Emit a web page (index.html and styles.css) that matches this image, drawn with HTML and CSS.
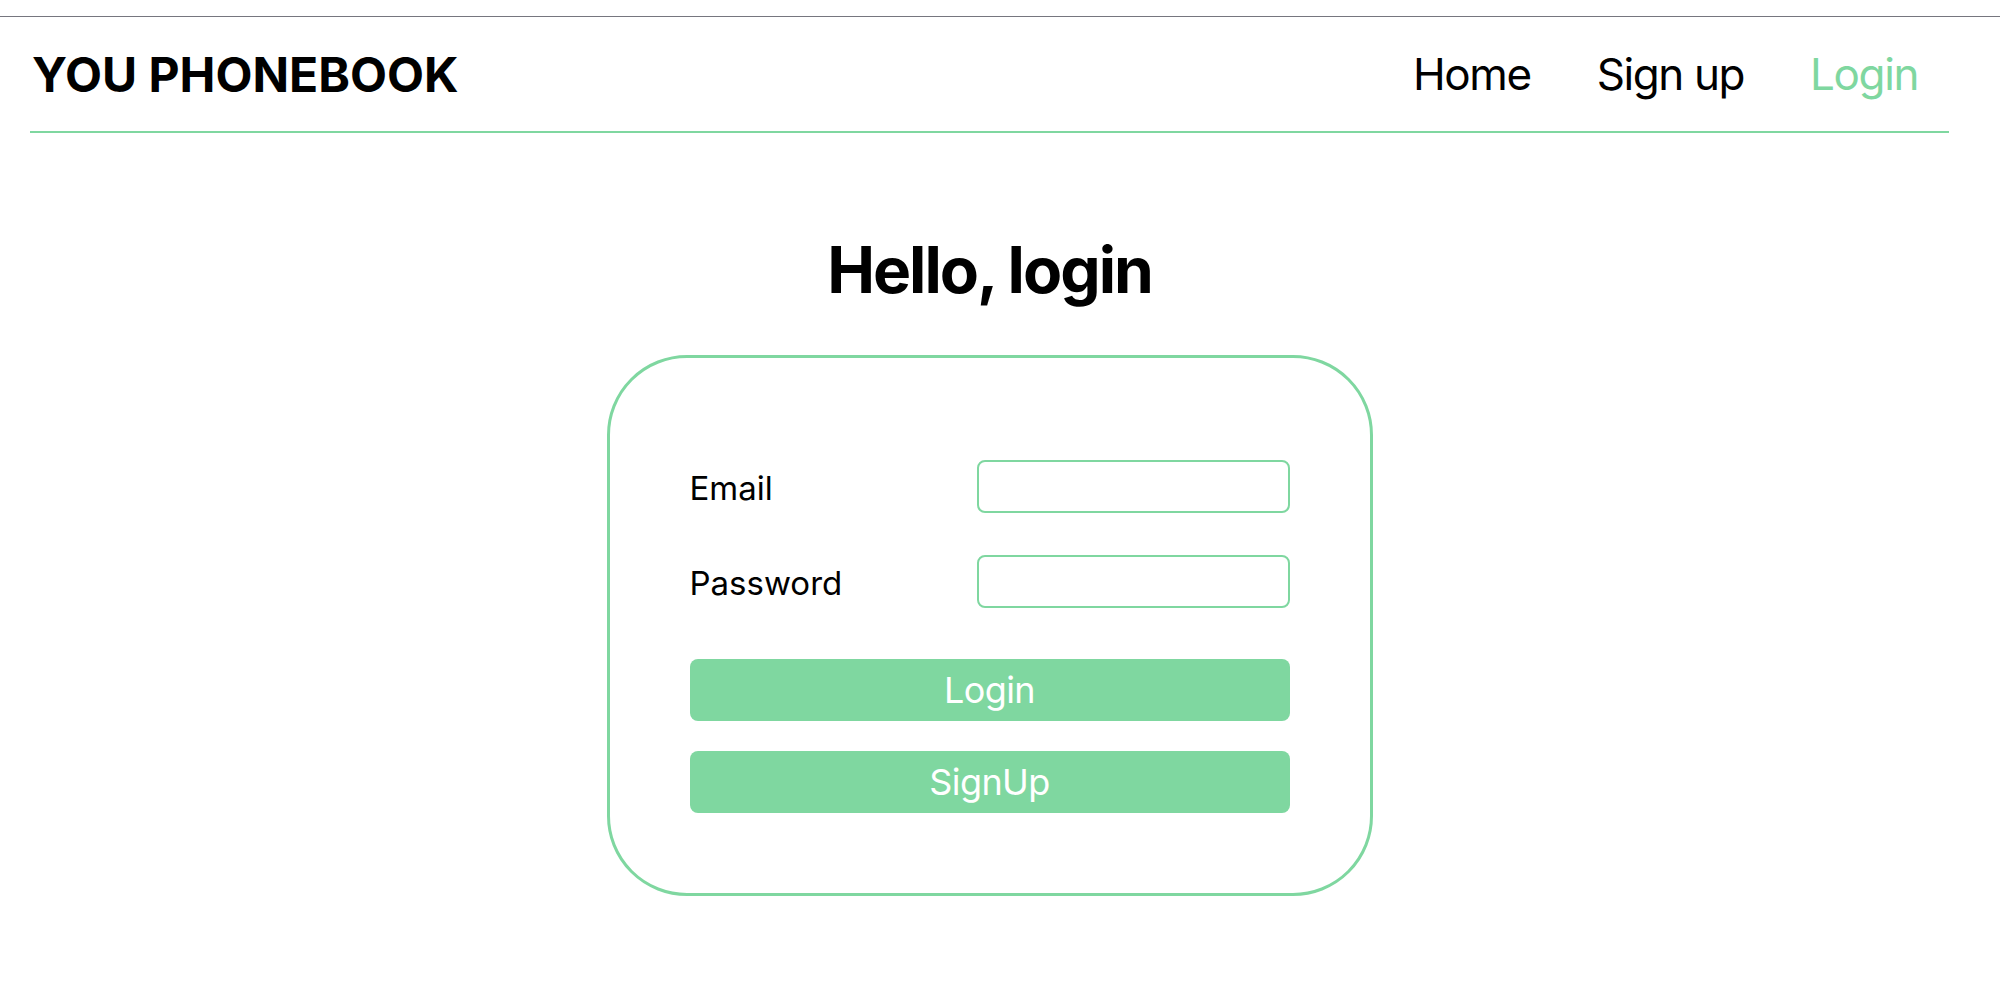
FILE: index.html
```html
<!DOCTYPE html>
<html lang="en">
<head>
<meta charset="utf-8">
<title>You Phonebook - Login</title>
<link rel="stylesheet" href="styles.css">
</head>
<body>
<div class="topline"></div>
<header class="header">
  <div class="logo">YOU PHONEBOOK</div>
  <nav class="nav">
    <a class="nav-link" href="#">Home</a>
    <a class="nav-link" href="#">Sign up</a>
    <a class="nav-link active" href="#">Login</a>
  </nav>
</header>
<main class="main">
  <h1 class="title">Hello, login</h1>
  <form class="card">
    <div class="rows">
      <label class="row">
        <span class="label">Email</span>
        <input class="input" type="email">
      </label>
      <label class="row">
        <span class="label">Password</span>
        <input class="input" type="password">
      </label>
    </div>
    <div class="buttons">
      <button class="btn" type="button">Login</button>
      <button class="btn" type="button">SignUp</button>
    </div>
  </form>
</main>
</body>
</html>
```
FILE: styles.css
```css
* { box-sizing: border-box; }

body {
  margin: 0;
  background: #ffffff;
  color: #000000;
  font-family: Inter, "Noto Sans", "Liberation Sans", sans-serif;
}

.topline {
  height: 17px;
  border-bottom: 1px solid #76767f;
}

.header {
  margin: 0 51px 0 30px;
  height: 116px;
  display: flex;
  align-items: center;
  justify-content: space-between;
  border-bottom: 2px solid #7fd7a0;
}

.logo {
  padding-left: 2px;
  font-size: 48px;
  font-weight: 700;
}

.nav {
  display: flex;
  gap: 66px;
  padding-right: 31px;
}

.nav-link {
  font-size: 44px;
  letter-spacing: -1.4px;
  color: #000000;
  text-decoration: none;
}

.nav-link.active {
  color: #7fd7a0;
}

.main {
  margin: 0 51px 0 30px;
  display: flex;
  flex-direction: column;
  align-items: center;
}

.title {
  margin: 98px 0 47px;
  font-size: 64px;
  font-weight: 700;
  line-height: 1.21;
  letter-spacing: -2px;
}

.card {
  width: 766px;
  height: 541px;
  border: 3px solid #7fd7a0;
  border-radius: 80px;
  padding: 102px 80px 80px;
  display: flex;
  flex-direction: column;
  gap: 51px;
}

.rows {
  display: flex;
  flex-direction: column;
  gap: 42px;
}

.row {
  display: flex;
  align-items: center;
  justify-content: space-between;
}

.label {
  font-size: 33px;
  padding-top: 3px;
}

.input {
  width: 313px;
  height: 53px;
  border: 2px solid #7fd7a0;
  border-radius: 8px;
  outline: none;
  font-size: 24px;
  font-family: inherit;
  padding: 0 10px;
}

.buttons {
  display: flex;
  flex-direction: column;
  gap: 30px;
}

.btn {
  height: 62px;
  border: none;
  border-radius: 8px;
  background: #7fd7a0;
  color: #ffffff;
  font-family: inherit;
  font-size: 36px;
  letter-spacing: -0.6px;
  cursor: pointer;
}
```
